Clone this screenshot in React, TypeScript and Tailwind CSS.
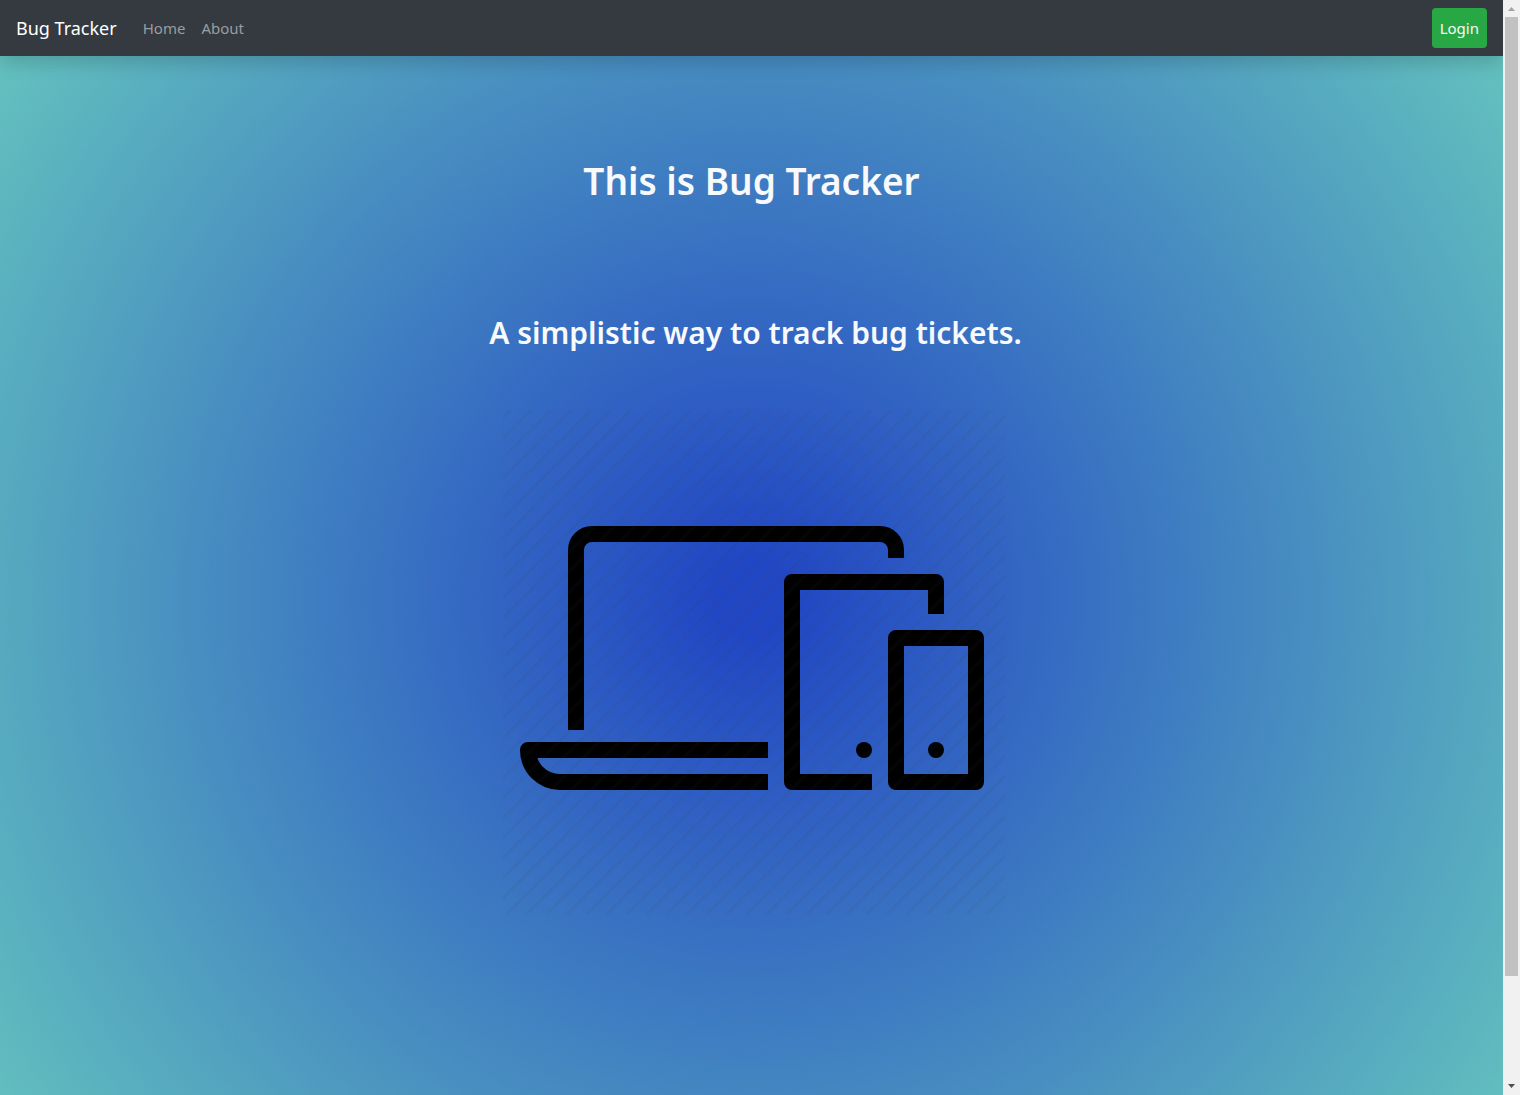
import React from "react";

function DevicesIcon() {
  return (
    <svg viewBox="0 0 512 512" className="block w-[512px] max-w-full" role="img" aria-label="Laptop, tablet and phone">
      <defs>
        <pattern id="stripes" width="20" height="20" patternUnits="userSpaceOnUse" patternTransform="translate(3 0)">
          <path d="M-10 10 L10 -10 M0 20 L20 0 M10 30 L30 10" stroke="#404040" strokeWidth="3" />
        </pattern>
      </defs>
      <g fill="none" stroke="#000" strokeWidth="16" strokeLinejoin="round">
        <path d="M80 328V148a16 16 0 0 1 16-16H384a16 16 0 0 1 16 16V156" />
        <path d="M272 348H32a32 32 0 0 0 32 32H272" />
        <path d="M376 380H296V180H440V212" />
        <path d="M400 236H480V380H400Z" />
      </g>
      <circle cx="368" cy="348" r="8" />
      <circle cx="440" cy="348" r="8" />
      <rect x="7" y="8" width="502" height="504" fill="url(#stripes)" opacity="0.08" />
    </svg>
  );
}

function Navbar() {
  return (
    <nav className="flex h-14 items-center bg-[#343a40] px-4 shadow-[0_8px_16px_rgba(0,0,0,0.15)]">
      <a href="#" className="mr-[26px] text-lg text-white">Bug Tracker</a>
      <div className="flex grow gap-4 text-[15px] text-[#9a9da0]">
        <a href="#home">Home</a>
        <a href="#about">About</a>
      </div>
      <button type="button" className="h-10 rounded bg-[#28a745] px-2 text-[15px] text-[#f8f9fa]">Login</button>
    </nav>
  );
}

function ScrollRail() {
  return (
    <div aria-hidden="true" className="relative flex w-[17px] shrink-0 flex-col items-center bg-[#f1f1f1]">
      <svg viewBox="0 0 17 17" className="h-[17px] w-[17px]"><path d="M5 11h7L8.500 7Z" fill="#a3a3a3" /></svg>
      <div className="flex w-[13px] grow flex-col">
        <div className="h-[90.4%] bg-[#c1c1c1]" />
      </div>
      <svg viewBox="0 0 17 17" className="h-[17px] w-[17px]"><path d="M5 6h7L8.500 10Z" fill="#505050" /></svg>
    </div>
  );
}

export default function App() {
  return (
    <div className="flex min-h-screen font-['Noto_Sans','Open_Sans',sans-serif]">
      <div className="grow bg-[radial-gradient(circle_at_50%_598px,#2247c4_40px,#64c3be_940px)]">
        <Navbar />
        <main className="flex flex-col items-center px-4 pt-[101px] text-[#f8f9fa]">
          <h1 className="text-[37px] leading-12 font-semibold">This is Bug Tracker</h1>
          <h2 className="mt-[109px] pl-2 text-[30px] leading-[38px] font-semibold">A simplistic way to track bug tickets.</h2>
          <div className="mt-[50px]">
            <DevicesIcon />
          </div>
        </main>
      </div>
      <ScrollRail />
    </div>
  );
}
